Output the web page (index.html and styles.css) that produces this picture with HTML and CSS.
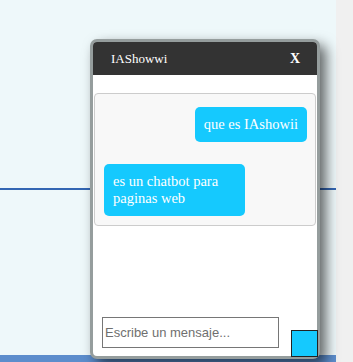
FILE: index.html
```html
<html>
<head>
<link rel="stylesheet" href="styles.css">
</head>
<body>

<div class="page">

  <div class="site">
    <div class="siteTop"></div>
    <div class="siteFill"></div>
    <div class="siteFoot"></div>
  </div>

  <div class="scrollTrack"></div>

  <div id="chatWindow" class="chatWindow">
    <div class="chatHeader">
      <span class="chatTitle">IAShowwi</span>
      <span class="chatClose">X</span>
    </div>

    <div class="chatBody">
      <div id="chatMessages" class="chatMessages">
        <div class="msg msgUser">que es IAshowii</div>
        <div class="msg msgBot">es un chatbot para paginas web</div>
      </div>

      <div class="chatFooter">
        <input class="chatInput" type="text" placeholder="Escribe un mensaje...">
        <button class="chatSend"></button>
      </div>
    </div>
  </div>

</div>

</body>
</html>
```

FILE: styles.css
```css
body {
  margin: 0;
  overflow: hidden;
}

.page {
  position: relative;
  display: flex;
  height: 362px;
}

.site {
  flex-grow: 1;
  display: flex;
  flex-direction: column;
  background-color: #eef8fa;
}

.siteTop {
  height: 188px;
  border-bottom: 2px solid #3366b3;
}

.siteFill {
  flex-grow: 1;
}

.siteFoot {
  height: 7px;
  background-color: #5c8dcc;
}

.scrollTrack {
  width: 17px;
  background-color: #f0f0f0;
}

.chatWindow {
  position: absolute;
  left: 90px;
  top: 39px;
  width: 224px;
  height: 314px;
  display: flex;
  flex-direction: column;
  border: 3px solid #959d9d;
  border-radius: 7px;
  background-color: white;
  box-shadow: 6px 6px 13px rgba(0, 0, 0, 0.6);
  font-family: "Liberation Serif", serif;
}

.chatHeader {
  height: 33px;
  display: flex;
  justify-content: space-between;
  align-items: center;
  padding: 0 17px 0 18px;
  background-color: #333333;
  border-radius: 4px 4px 0 0;
  color: white;
  font-size: 13px;
}

.chatClose {
  font-weight: bold;
  font-size: 14px;
}

.chatBody {
  flex-grow: 1;
  display: flex;
  flex-direction: column;
  justify-content: space-between;
}

.chatMessages {
  display: flex;
  flex-direction: column;
  gap: 22px;
  margin: 18px 1px 0;
  padding: 13px 8px 9px 9px;
  border: 1px solid #cccccc;
  border-radius: 4px;
  background-color: #f8f8f8;
}

.msg {
  padding: 9px 9px;
  border-radius: 5px;
  background-color: #15c9fe;
  color: white;
  font-size: 14.5px;
  line-height: 17px;
}

.msgUser {
  align-self: flex-end;
}

.msgBot {
  align-self: flex-start;
  box-sizing: border-box;
  max-width: 141px;
}

.chatFooter {
  display: flex;
  align-items: flex-end;
  padding-left: 9px;
}

.chatInput {
  box-sizing: border-box;
  width: 177px;
  height: 31px;
  margin-bottom: 8px;
  padding: 1px 2px;
  border: 1px solid #767676;
  font-family: "Liberation Sans", Arial, sans-serif;
  font-size: 13px;
}

.chatInput::placeholder {
  color: #6f6f6f;
}

.chatSend {
  box-sizing: border-box;
  width: 27px;
  height: 27px;
  margin: 0 -1px -1px 12px;
  border: 1px solid #222222;
  background-color: #15c9fe;
}
```
